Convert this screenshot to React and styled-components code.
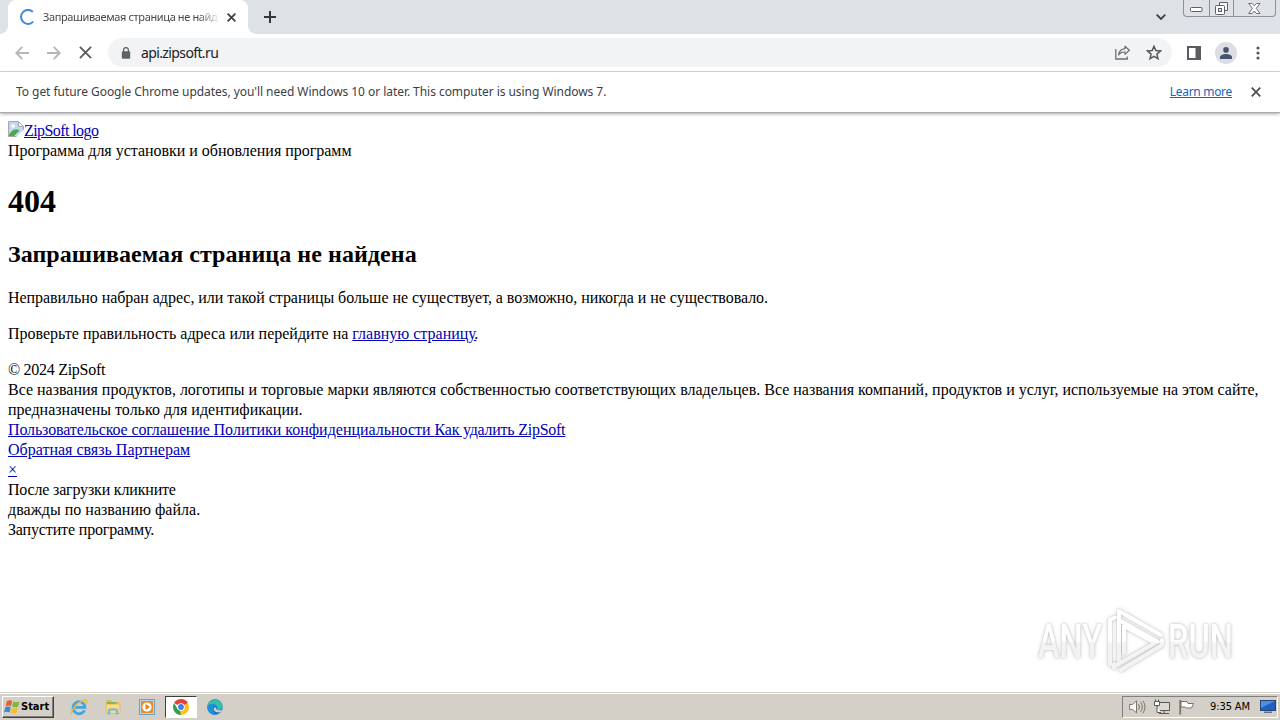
import React from 'react';
import styled, { createGlobalStyle } from 'styled-components';

const App = () => {
  return (
    <Desktop>
      <GlobalStyle />
      <TabStrip />
      <Toolbar />
      <InfoBar>
        <InfoText>To get future Google Chrome updates, you'll need Windows 10 or later. This computer is using Windows 7.</InfoText>
        <LearnMore href="#">Learn more</LearnMore>
        <CrossIcon size={10} color="#4d5156" weight={1.8} />
      </InfoBar>
      <ErrorPage />
      <Watermark />
      <Taskbar />
    </Desktop>
  );
};

const CrossIcon = ({ size, color, weight }) => (
  <Icon width={size} height={size} viewBox="0 0 10 10">
    <path d="M0.7 0.7 9.3 9.3M9.3 0.7 0.7 9.3" stroke={color} strokeWidth={weight * 10 / size} fill="none" />
  </Icon>
);

const TabStrip = () => (
  <Strip>
    <Tab>
      <Icon width="16" height="16" viewBox="0 0 16 16">
        <path d="M12.9 2.9A7 7 0 1 0 13.2 12.6" fill="none" stroke="#4688e0" strokeWidth="2" />
      </Icon>
      <TabTitle>Запрашиваемая страница не найд</TabTitle>
      <CrossIcon size={9} color="#3c4043" weight={1.8} />
    </Tab>
    <NewTab>
      <Icon width="12" height="12" viewBox="0 0 12 12">
        <path d="M6 0v12M0 6h12" stroke="#33363a" strokeWidth="2" />
      </Icon>
    </NewTab>
    <TabSearch>
      <Icon width="10" height="6" viewBox="0 0 10 6">
        <path d="M0.7 0.7 5 5 9.3 0.7" fill="none" stroke="#3c4043" strokeWidth="1.8" />
      </Icon>
    </TabSearch>
    <WindowButtons>
      <WindowButton width={25}>
        <MinimizeIcon width="13" height="5" viewBox="0 0 13 5">
          <rect x="0.5" y="0.5" width="11.5" height="4" rx="1" fill="#fff" stroke="#5c6068" />
        </MinimizeIcon>
      </WindowButton>
      <WindowButton width={25}>
        <Icon width="13" height="13" viewBox="0 0 13 13">
          <path d="M4.5 0.5h8v8h-8z" fill="#f6f7f9" stroke="#5c6068" />
          <rect x="0.5" y="3.5" width="9" height="9" rx="1" fill="#fff" stroke="#5c6068" />
          <rect x="3.5" y="6.5" width="3" height="3" fill="#dee1e6" stroke="#5c6068" />
        </Icon>
      </WindowButton>
      <WindowButton width={42}>
        <Icon width="13" height="11" viewBox="0 0 13 11">
          <path d="M0.7 0.5h3.4l2.2 2.3L8.6 0.5H12L8.2 5.4 12 10.5H8.5L6.3 8 4.1 10.5H0.7L4.4 5.4z" fill="#fff" stroke="#5c6068" strokeWidth="0.9" />
        </Icon>
      </WindowButton>
    </WindowButtons>
  </Strip>
);

const Toolbar = () => (
  <Bar>
    <NavButtons>
      <Icon width="14" height="14" viewBox="0 0 14 14">
        <path d="M14 7H1.5M7.3 0.8 1.2 7l6.1 6.2" fill="none" stroke="#b4b6b9" strokeWidth="1.8" />
      </Icon>
      <Icon width="14" height="14" viewBox="0 0 14 14">
        <path d="M0 7h12.5M6.7 0.8 12.8 7l-6.1 6.2" fill="none" stroke="#b4b6b9" strokeWidth="1.8" />
      </Icon>
      <CrossIcon size={13} color="#55585c" weight={1.8} />
    </NavButtons>
    <Omnibox>
      <Icon width="10" height="12" viewBox="0 0 10 12">
        <path d="M2.6 5V3a2.4 2.4 0 0 1 4.8 0v2" fill="none" stroke="#5f6368" strokeWidth="1.3" />
        <rect x="0.8" y="4.2" width="8.4" height="7.6" rx="1" fill="#5f6368" />
      </Icon>
      <Url>api.zipsoft.ru</Url>
      <Icon width="16" height="15" viewBox="0 0 16 15">
        <path d="M1.8 4v10h11.4v-2.5" fill="none" stroke="#6a6e73" strokeWidth="1.3" />
        <path d="M11 1.2 15.3 5.3 11 9.4V7C8 6.8 6 7.7 4.5 10 4.9 6.6 7 4 11 3.6z" fill="none" stroke="#6a6e73" strokeWidth="1.2" strokeLinejoin="round" />
      </Icon>
      <Icon width="16" height="16" viewBox="0 0 16 16">
        <path d="m8 1.3 1.8 4.3 4.7.4-3.6 3.1 1.1 4.6L8 11.3l-4 2.4 1.1-4.6L1.5 6l4.7-.4z" fill="none" stroke="#55595e" strokeWidth="1.5" />
      </Icon>
    </Omnibox>
    <SidePanel>
      <Icon width="14" height="14" viewBox="0 0 14 14">
        <path d="M0 0h14v14H0zM2 2v10h6.5V2z" fill="#5a5c61" fillRule="evenodd" />
      </Icon>
    </SidePanel>
    <Avatar>
      <Icon width="12" height="12" viewBox="0 0 12 12">
        <circle cx="6" cy="2.9" r="2.8" fill="#47536e" />
        <path d="M0 12V10.2C0 8 3.5 7 6 7s6 1 6 3.2V12z" fill="#47536e" />
      </Icon>
    </Avatar>
    <MenuDots>
      <Icon width="4" height="14" viewBox="0 0 4 14">
        <circle cx="2" cy="2" r="1.6" fill="#55585c" />
        <circle cx="2" cy="7" r="1.6" fill="#55585c" />
        <circle cx="2" cy="12" r="1.6" fill="#55585c" />
      </Icon>
    </MenuDots>
  </Bar>
);

const ErrorPage = () => (
  <Page>
    <Row>
      <LogoLink href="#">
        <Icon width="16" height="16" viewBox="0 0 16 16">
          <path d="M0.5 0.5h10l5 5v10h-15z" fill="#c3d6f6" stroke="#a9a9a9" />
          <circle cx="5" cy="5" r="1.8" fill="#fff" />
          <path d="M1 15v-1.5C4 9.5 7 6.5 11.5 9.5L6 15z" fill="#4fa848" />
          <path d="M10.5 0.5v5h5z" fill="#fff" stroke="#a9a9a9" />
          <path d="M16 8.5 8 16h8z" fill="#fff" />
        </Icon>
        <Text spacing={-0.58}>ZipSoft logo</Text>
      </LogoLink>
    </Row>
    <Row spacing={-0.02}>Программа для установки и обновления программ</Row>
    <Title>404</Title>
    <Subtitle>Запрашиваемая страница не найдена</Subtitle>
    <Paragraph spacing={-0.05}>Неправильно набран адрес, или такой страницы больше не существует, а возможно, никогда и не существовало.</Paragraph>
    <Paragraph>Проверьте правильность адреса или перейдите на <Link href="#">главную страницу</Link><Period>.</Period></Paragraph>
    <Row spacing={-0.28}>© 2024 ZipSoft</Row>
    <Row spacing={-0.01}>Все названия продуктов, логотипы и торговые марки являются собственностью соответствующих владельцев. Все названия компаний, продуктов и услуг, используемые на этом сайте,</Row>
    <Row>предназначены только для идентификации.</Row>
    <Row>
      <Link href="#" spacing={-0.13}>Пользовательское соглашение </Link>
      <Link href="#" spacing={-0.01}>Политики конфиденциальности </Link>
      <Link href="#" spacing={-0.25}>Как удалить ZipSoft</Link>
    </Row>
    <Row><Link href="#">Обратная связь </Link><Link href="#">Партнерам</Link></Row>
    <Row><Link href="#">×</Link></Row>
    <Row spacing={-0.18}>После загрузки кликните</Row>
    <Row spacing={0.02}>дважды по названию файла.</Row>
    <Row spacing={-0.15}>Запустите программу.</Row>
  </Page>
);

const Watermark = () => (
  <Mark width="230" height="80" viewBox="0 0 230 80">
    <defs>
      <linearGradient id="fade" gradientUnits="userSpaceOnUse" x1="0" y1="8" x2="0" y2="72">
        <stop offset="0.48" stopColor="#fff" />
        <stop offset="0.52" stopColor="#f3f3f3" />
      </linearGradient>
    </defs>
    <g fontFamily="Roboto, sans-serif" fontSize="49" fontWeight="500" fill="url(#fade)">
      <text x="8" y="56" textLength="64" lengthAdjust="spacingAndGlyphs">ANY</text>
      <text x="138" y="56" textLength="65" lengthAdjust="spacingAndGlyphs">RUN</text>
    </g>
    <g fill="none" stroke="url(#fade)" strokeWidth="4" strokeLinejoin="round" strokeLinecap="round">
      <path d="M80 63V17.500l5-2" />
      <path d="M89 59V9l42 24" />
      <path d="M89 18l39 22" />
      <path d="M94 51V24l31 17-40 23" />
      <path d="M84 66v-4M91 68l41-25v-5" />
    </g>
  </Mark>
);

const Taskbar = () => (
  <Tasks>
    <StartButton>
      <Icon width="17" height="16" viewBox="0 0 17 16">
        <path d="M3 2C5 .8 6.7 1 8.2 2L7 7.2C5.3 6.3 3.7 6.3 1.6 7.2z" fill="#e8602c" />
        <path d="M9.2 2.4c2 1 4 1 6.3-.2L14.2 7.5c-2 1.1-4 1.1-6.2.1z" fill="#7db843" />
        <path d="M1.4 8.2C3.5 7.2 5 7.3 6.7 8.2L5.5 13.4C3.8 12.5 2.2 12.5 0 13.4z" fill="#3f86cf" />
        <path d="M7.8 8.7c2 1 4 1 6.2-.1L12.7 13.8c-2.2 1.1-4.2 1-6.2 0z" fill="#f6bd2c" />
      </Icon>
      Start
    </StartButton>
    <TaskItem>
      <Icon width="18" height="18" viewBox="0 0 18 18">
        <path d="M14.5 12.2A6 6 0 1 1 15 9.4H5" fill="none" stroke="#42a5df" strokeWidth="2.7" />
        <path d="M2 16.5C-1 13 10 2 15.5 2c2 .4 1 3 .4 4" fill="none" stroke="#edba3c" strokeWidth="1.4" />
      </Icon>
    </TaskItem>
    <TaskItem>
      <Icon width="16" height="16" viewBox="0 0 16 16">
        <path d="M1 1h5l1 2h7v10H1z" fill="#e5b94f" />
        <path d="M2 3h9v4H2z" fill="#71b565" />
        <path d="M1 5h14v9.5H1z" fill="#f7dc83" stroke="#d4ae4b" strokeWidth=".6" />
        <path d="M4 15.5v-4c0-1.5 8-1.500 8 0v4" fill="none" stroke="#79b7dd" strokeWidth="2.4" />
      </Icon>
    </TaskItem>
    <TaskItem>
      <Icon width="16" height="16" viewBox="0 0 16 16">
        <rect x="0.5" y="0.5" width="15" height="15" fill="#b8d8ee" stroke="#65a3ce" />
        <rect x="2" y="2" width="12" height="12" rx="1" fill="#ef8a1d" />
        <circle cx="8" cy="8" r="4.6" fill="#fff" />
        <path d="M6.5 5v6L11 8z" fill="#ef7d12" />
      </Icon>
    </TaskItem>
    <TaskItem active>
      <Icon width="16" height="16" viewBox="0 0 16 16">
        <path d="M8 8 1.1 4A8 8 0 0 1 14.9 4z" fill="#e34133" />
        <path d="M8 8H8L14.9 4A8 8 0 0 1 8 16L11.4 10z" fill="#fbc116" />
        <path d="M1.1 4 4.6 10 8 12 8 16A8 8 0 0 1 1.1 4z" fill="#30a04e" />
        <path d="M8 8 11.5 10 8 16 7 12z" fill="#fbc116" />
        <circle cx="8" cy="8" r="3.8" fill="#fff" />
        <circle cx="8" cy="8" r="2.9" fill="#3f7fe8" />
      </Icon>
    </TaskItem>
    <TaskItem>
      <Icon width="16" height="16" viewBox="0 0 16 16">
        <circle cx="8" cy="8" r="7.7" fill="#1673c7" />
        <path d="M.5 7C1.5-1 14-1.6 15.7 7c.3 3.5-3 4.5-6 3.7 1-1 .8-2 .3-3C8 4.7 3 4.5.5 7z" fill="#35bfa5" />
        <path d="M.5 7C3 4.2 7.5 4.4 9 6.5 5 6.5 4.5 12.8 9.5 15.6 4 16.5-.5 12 .5 7z" fill="#1b91dc" />
        <path d="M9.5 8C8 9 9 12 15 11.2l-1 1.6c-4 1.8-8.5-.8-7-4z" fill="#d4d0c8" />
      </Icon>
    </TaskItem>
    <Tray>
      <Icon width="17" height="16" viewBox="0 0 17 16">
        <path d="M.6 5.5h3L7.5 1.8v12L3.6 10.4h-3z" fill="#fff" stroke="#77746f" />
        <path d="M9.5 5.2q2 2.8 0 5.6M11.6 3.3q3.4 4.7 0 9.4M13.8 1.8q4.6 6.2 0 12.4" fill="none" stroke="#77746f" />
      </Icon>
      <Icon width="17" height="16" viewBox="0 0 17 16">
        <path d="M3.5 3.5h12v8h-12z" fill="#dcdad5" stroke="#5d5b57" />
        <path d="M5 14.5h10M10 12v2" stroke="#5d5b57" />
        <path d="M.5 2.5h5v4h-5zM1.5 .5v2M4.5.5v2M3 7v6.5h4" fill="#fff" stroke="#5d5b57" />
      </Icon>
      <Icon width="16" height="16" viewBox="0 0 16 16">
        <path d="M1.2 1v14.5" stroke="#77746f" strokeWidth="1.8" />
        <path d="M2 2.5H8l1 2h5.5L12.5 9H7.5l-1-1H2z" fill="#fff" stroke="#77746f" />
      </Icon>
      <Clock>9:35 AM</Clock>
      <Icon width="16" height="13" viewBox="0 0 16 13">
        <rect x="0.5" y="0.5" width="15" height="10" fill="#1e5fc0" stroke="#29466f" />
        <path d="M1 1h14L1 8z" fill="#4a90e2" />
        <path d="M4 12.2h8" stroke="#29466f" />
      </Icon>
    </Tray>
  </Tasks>
);

const GlobalStyle = createGlobalStyle`
  body {
    margin: 0;
    background: #fff;
  }

  * {
    box-sizing: border-box;
  }
`;

const Icon = styled.svg`
  display: block;
  flex: none;
`;

const MinimizeIcon = styled(Icon)`
  margin-top: 3px;
`;

const Desktop = styled.div`
  display: flex;
  flex-direction: column;
  position: relative;
  width: 1280px;
  height: 720px;
  overflow: hidden;
  background: #fff;
  font-family: 'DejaVu Sans Condensed', 'DejaVu Sans', sans-serif;
`;

const Strip = styled.div`
  display: flex;
  align-items: flex-start;
  flex: none;
  height: 34px;
  padding-left: 8px;
  background: #dee1e6;
`;

const Tab = styled.div`
  display: flex;
  align-items: center;
  position: relative;
  width: 240px;
  height: 34px;
  padding: 0 11px 0 12px;
  border-radius: 8px 8px 0 0;
  background: #fff;

  &::before,
  &::after {
    content: '';
    position: absolute;
    bottom: 0;
    width: 8px;
    height: 8px;
  }

  &::before {
    left: -8px;
    background: radial-gradient(circle at 0 0, transparent 7.5px, #fff 8px);
  }

  &::after {
    right: -8px;
    background: radial-gradient(circle at 100% 0, transparent 7.5px, #fff 8px);
  }
`;

const TabTitle = styled.div`
  width: 175px;
  margin: 0 9px 2px 7px;
  white-space: nowrap;
  font-family: 'Noto Sans', sans-serif;
  font-size: 11px;
  letter-spacing: -0.37px;
  color: #45484c;
  mask-image: linear-gradient(to right, #000 155px, transparent 178px);
`;

const NewTab = styled.div`
  margin: 11px 0 0 16px;
`;

const TabSearch = styled.div`
  margin: 14px 17px 0 auto;
`;

const WindowButtons = styled.div`
  display: flex;
  width: 93px;
  height: 17px;
  margin-right: 4px;
  border: 1px solid #8c9098;
  border-top: none;
  border-radius: 0 0 4px 4px;
`;

const WindowButton = styled.div`
  display: flex;
  align-items: center;
  justify-content: center;
  width: ${(props) => props.width}px;

  & + & {
    border-left: 1px solid #8c9098;
  }
`;

const Bar = styled.div`
  display: flex;
  align-items: center;
  flex: none;
  height: 38px;
  padding-left: 15px;
  border-bottom: 1px solid #dadce0;
`;

const NavButtons = styled.div`
  display: flex;
  align-items: center;
  gap: 18px;
  width: 93px;
`;

const Omnibox = styled.div`
  display: flex;
  align-items: center;
  width: 1064px;
  height: 29px;
  padding: 0 10px 0 13px;
  border-radius: 15px;
  background: #f1f3f4;
  gap: 16px;
`;

const Url = styled.div`
  flex: 1;
  margin-left: -6px;
  font-family: 'Noto Sans', sans-serif;
  font-size: 14px;
  letter-spacing: -0.62px;
  color: #202124;
`;

const SidePanel = styled.div`
  margin-left: 15px;
`;

const Avatar = styled.div`
  display: flex;
  align-items: center;
  justify-content: center;
  width: 22px;
  height: 22px;
  margin-left: 14px;
  border-radius: 50%;
  background: #dbdee3;
`;

const MenuDots = styled.div`
  margin-left: 19px;
`;

const InfoBar = styled.div`
  display: flex;
  align-items: center;
  flex: none;
  height: 41px;
  padding: 0 19px 0 16px;
  border-bottom: 1px solid #a9abae;
  box-shadow: 0 1px 3px rgba(0, 0, 0, 0.35);
  font-family: 'Noto Sans', sans-serif;
  font-size: 12px;
`;

const InfoText = styled.div`
  flex: 1;
  padding-bottom: 1px;
  letter-spacing: -0.05px;
  color: #3c4043;
`;

const LearnMore = styled.a`
  margin-right: 19px;
  padding-bottom: 1px;
  letter-spacing: -0.3px;
  color: #1a64b8;
`;

const Page = styled.main`
  flex: 1;
  padding: 8px 8px 0;
  font-family: 'Liberation Serif', serif;
  font-size: 16px;
  line-height: 20px;
  white-space: nowrap;
  color: #000;
`;

const Row = styled.div`
  height: 20px;
  letter-spacing: ${(props) => props.spacing || 0}px;
`;

const Link = styled.a`
  letter-spacing: ${(props) => props.spacing || 0}px;
  white-space: pre;
  color: #0000b8;
`;

const LogoLink = styled(Link)`
  display: flex;
`;

const Text = styled.span`
  letter-spacing: ${(props) => props.spacing}px;
`;

const Period = styled.span`
  margin-left: -2px;
`;

const Title = styled.h1`
  margin: 21px 0;
  font-size: 32px;
  line-height: 38px;
`;

const Subtitle = styled.h2`
  margin: 21px 0 20px;
  font-size: 24px;
  line-height: 27px;
  letter-spacing: 0.06px;
`;

const Paragraph = styled.p`
  margin: 0 0 16px;
  letter-spacing: ${(props) => props.spacing || 0}px;
`;

const Mark = styled.svg`
  position: absolute;
  left: 1030px;
  top: 602px;
  filter: drop-shadow(0 0 1px rgba(0, 0, 0, 0.18)) drop-shadow(0 0 2px rgba(0, 0, 0, 0.15));
`;

const Tasks = styled.footer`
  display: flex;
  align-items: center;
  flex: none;
  height: 28px;
  padding: 2px 2px 2px;
  border-top: 1px solid #d4d0c8;
  background: #d4d0c8;
  box-shadow: inset 0 1px 0 #fff;
`;

const StartButton = styled.div`
  display: flex;
  align-items: center;
  width: 52px;
  height: 22px;
  margin-right: 9px;
  padding-left: 1px;
  border: 1px solid;
  border-color: #fff #404040 #404040 #fff;
  box-shadow: inset -1px -1px 0 #808080;
  font-size: 11px;
  font-weight: bold;
  color: #000;
`;

const TaskItem = styled.div`
  display: flex;
  align-items: center;
  justify-content: center;
  width: 32px;
  height: 22px;
  margin-right: 2px;
  border: 1px solid transparent;
  ${(props) => props.active && `
    border-color: #404040 #fff #fff #404040;
    background: #fff;
  `}
`;

const Tray = styled.div`
  display: flex;
  align-items: center;
  gap: 8px;
  width: 156px;
  height: 22px;
  margin-left: auto;
  padding-left: 6px;
  border: 1px solid;
  border-color: #808080 #fff #fff #808080;
`;

const Clock = styled.div`
  width: 42px;
  margin: 0 0 0 7px;
  white-space: nowrap;
  font-size: 11px;
  letter-spacing: -0.1px;
  color: #000;
`;

export default App;
